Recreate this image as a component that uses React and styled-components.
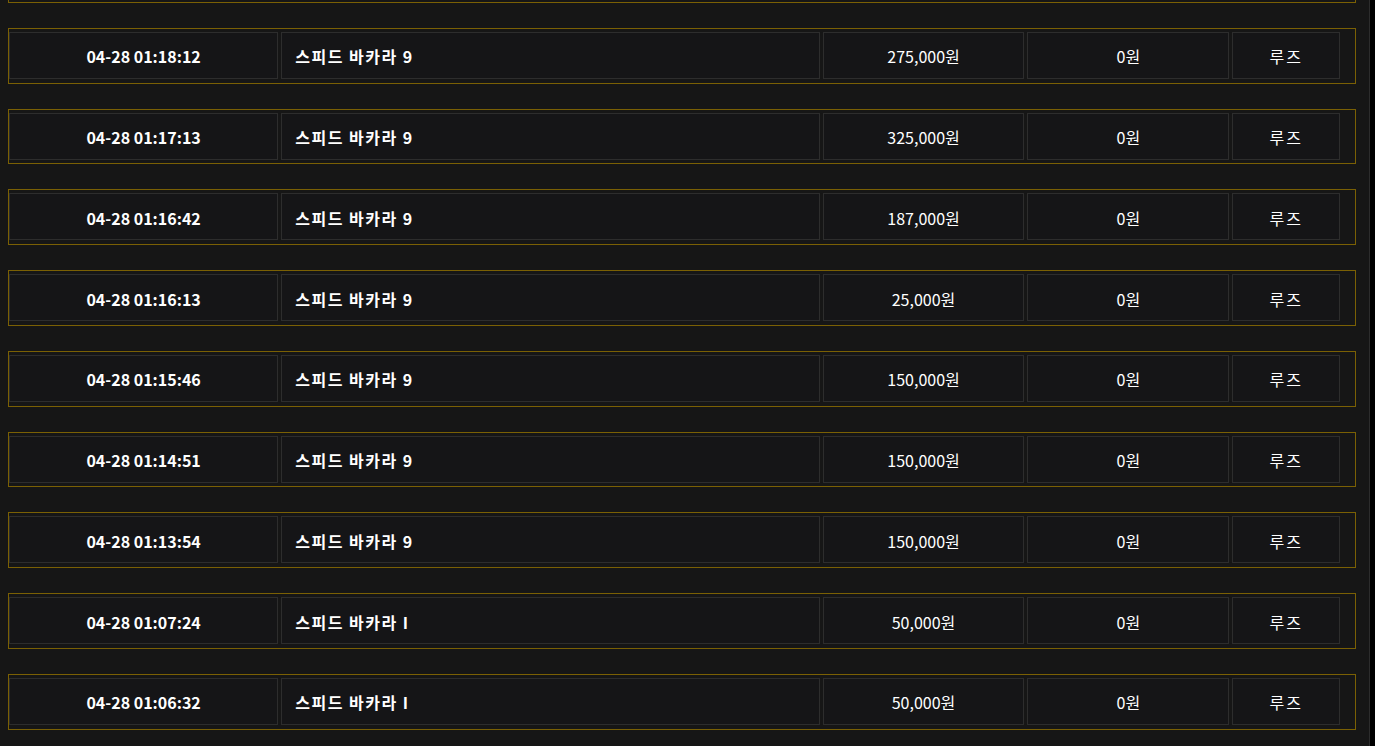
import React, { useLayoutEffect, useRef } from "react";
import styled, { createGlobalStyle } from "styled-components";

const GlobalStyle = createGlobalStyle`
  html, body {
    margin: 0;
    padding: 0;
    background: #161616;
    overflow: hidden;
  }
  * {
    box-sizing: border-box;
  }
`;

const Page = styled.div`
  display: flex;
  height: 100vh;
  background: #161616;
`;

const Scroller = styled.div`
  flex: 1;
  overflow-y: auto;
  scrollbar-width: none;
  font-family: "Noto Sans CJK KR", "Noto Sans", sans-serif;

  &::-webkit-scrollbar {
    display: none;
  }
`;

const Rail = styled.div`
  flex: 0 0 6px;
  background: #000;
  border-left: 1px solid #2c2c2c;
`;

const List = styled.div`
  padding: 25px 13px 25px 8px;
  display: flex;
  flex-direction: column;
  gap: 25px;
`;

const Row = styled.div`
  display: flex;
  gap: 3px;
  height: 55.75px;
  padding: 3px 0 3.75px 0;
  border: 1px solid #7a6004;
`;

const Cell = styled.div`
  flex: 0 0 ${(p) => p.$w}%;
  display: flex;
  align-items: center;
  justify-content: ${(p) => (p.$left ? "flex-start" : "center")};
  padding: 2px 0 0 ${(p) => (p.$left ? "13px" : "0")};
  background: #151517;
  border: 1px solid #2d2d2d;
  color: #fff;
  font-size: 16px;
  font-weight: ${(p) => (p.$bold ? 700 : 400)};
  letter-spacing: ${(p) => p.$spacing || 0}px;
  white-space: nowrap;
`;

const rows = [
  { time: "04-28 01:18:55", game: "스피드 바카라 9", bet: "120,000원" },
  { time: "04-28 01:18:12", game: "스피드 바카라 9", bet: "275,000원" },
  { time: "04-28 01:17:13", game: "스피드 바카라 9", bet: "325,000원" },
  { time: "04-28 01:16:42", game: "스피드 바카라 9", bet: "187,000원" },
  { time: "04-28 01:16:13", game: "스피드 바카라 9", bet: "25,000원" },
  { time: "04-28 01:15:46", game: "스피드 바카라 9", bet: "150,000원" },
  { time: "04-28 01:14:51", game: "스피드 바카라 9", bet: "150,000원" },
  { time: "04-28 01:13:54", game: "스피드 바카라 9", bet: "150,000원" },
  { time: "04-28 01:07:24", game: "스피드 바카라 I", bet: "50,000원" },
  { time: "04-28 01:06:32", game: "스피드 바카라 I", bet: "50,000원" },
];

const App = () => {
  const ref = useRef(null);

  useLayoutEffect(() => {
    // list is scrolled down by one row, as on the screen
    if (ref.current) ref.current.scrollTop = 25 + 80.75 - 28;
  }, []);

  return (
    <>
      <GlobalStyle />
      <Page>
        <Scroller ref={ref}>
          <List>
            {rows.map((r, i) => (
              <Row key={i}>
                <Cell $w={20} $bold>{r.time}</Cell>
                <Cell $w={40} $bold $left $spacing={1.5}>{r.game}</Cell>
                <Cell $w={15}>{r.bet}</Cell>
                <Cell $w={15}>0원</Cell>
                <Cell $w={8} $spacing={2}>루즈</Cell>
              </Row>
            ))}
          </List>
        </Scroller>
        <Rail />
      </Page>
    </>
  );
};

export default App;
